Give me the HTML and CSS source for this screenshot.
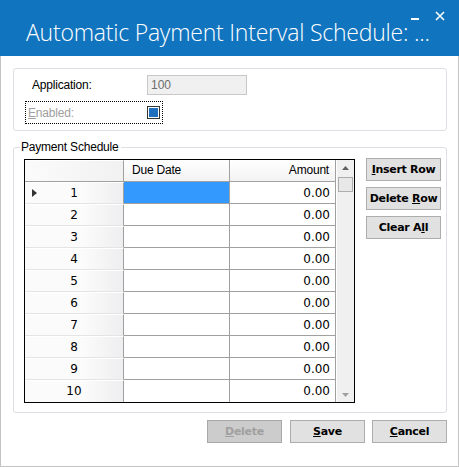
FILE: index.html
```html
<!DOCTYPE html>
<html>
<head>
<meta charset="utf-8">
<link rel="stylesheet" href="styles.css">
</head>
<body>
<div class="window">
  <div class="titlebar">
    <div class="title">Automatic Payment Interval Schedule: ...</div>
    <div class="ctrls">
      <svg class="min" width="8" height="2" viewBox="0 0 8 2"><rect width="8" height="2" fill="#fff"/></svg>
      <svg class="close" width="10" height="10" viewBox="0 0 10 10"><path d="M1 1L9 9M9 1L1 9" stroke="#fff" stroke-width="1.6"/></svg>
    </div>
  </div>
  <div class="content">
    <div class="group1">
      <div class="row app">
        <span class="lbl">Application:</span>
        <span class="textbox">100</span>
      </div>
      <div class="row enabled">
        <span class="lbl dis"><u>E</u>nabled:</span>
        <span class="check"></span>
      </div>
    </div>
    <fieldset class="group2">
      <legend>Payment Schedule</legend>
      <div class="gridwrap">
        <div class="grid">
          <div class="gridbody">
            <div class="hrow">
              <div class="rh"></div>
              <div class="c1 hc">Due Date</div>
              <div class="c2 hc right">Amount</div>
            </div>
            <div class="drow"><div class="rh"><span class="arrow"></span>1</div><div class="c1 sel"></div><div class="c2">0.00</div></div>
            <div class="drow"><div class="rh">2</div><div class="c1"></div><div class="c2">0.00</div></div>
            <div class="drow"><div class="rh">3</div><div class="c1"></div><div class="c2">0.00</div></div>
            <div class="drow"><div class="rh">4</div><div class="c1"></div><div class="c2">0.00</div></div>
            <div class="drow"><div class="rh">5</div><div class="c1"></div><div class="c2">0.00</div></div>
            <div class="drow"><div class="rh">6</div><div class="c1"></div><div class="c2">0.00</div></div>
            <div class="drow"><div class="rh">7</div><div class="c1"></div><div class="c2">0.00</div></div>
            <div class="drow"><div class="rh">8</div><div class="c1"></div><div class="c2">0.00</div></div>
            <div class="drow"><div class="rh">9</div><div class="c1"></div><div class="c2">0.00</div></div>
            <div class="drow last"><div class="rh">10</div><div class="c1"></div><div class="c2">0.00</div></div>
          </div>
          <div class="scroll">
            <svg class="sarrow" width="7" height="4" viewBox="0 0 7 4"><path d="M0 4L3.5 0L7 4Z" fill="#606060"/></svg>
            <div class="thumb"></div>
            <div class="track"></div>
            <svg class="sarrow" width="7" height="4" viewBox="0 0 7 4"><path d="M0 0L3.5 4L7 0Z" fill="#a0a0a0"/></svg>
          </div>
        </div>
        <div class="sidebtns">
          <div class="btn"><span><u>I</u>nsert Row</span></div>
          <div class="btn"><span>Delete <u>R</u>ow</span></div>
          <div class="btn"><span>Clear A<u>l</u>l</span></div>
        </div>
      </div>
    </fieldset>
    <div class="footer">
      <div class="btn bb disabled"><span><u>D</u>elete</span></div>
      <div class="btn bb"><span><u>S</u>ave</span></div>
      <div class="btn bb"><span><u>C</u>ancel</span></div>
    </div>
  </div>
</div>
</body>
</html>
```
FILE: styles.css
```css
html, body { margin: 0; padding: 0; background: #fff; }
body { font-family: Tahoma, "DejaVu Sans", "Liberation Sans", sans-serif; font-size: 11px; color: #000; }
.window {
  width: 459px; height: 467px; box-sizing: border-box;
  border: 1px solid #c4c4c4; border-top: none;
  background: #fff; display: flex; flex-direction: column;
}
.titlebar {
  height: 56px; background: #1174be; margin: 0 -1px; color: #fff;
  display: flex; align-items: flex-start; position: relative;
}
.title {
  font-family: "Open Sans", "Segoe UI", sans-serif; font-weight: 300;
  font-size: 23px; letter-spacing: -0.22px; margin-top: 16px; margin-left: 26px; white-space: nowrap;
}
.ctrls { position: absolute; right: 14px; top: 11px; display: flex; align-items: flex-start; gap: 16px; }
.ctrls .min { margin-top: 7px; }
.content { padding: 12px 11px 0 12px; display: flex; flex-direction: column; }
.group1 {
  height: 61px; border: 1px solid #dcdfe4; border-radius: 3px;
  position: relative;
}
.row { display: flex; align-items: center; }
.app { margin-top: 6px; height: 20px; }
.app .lbl { margin-left: 18px; width: 115px; font-family: "Liberation Sans", sans-serif; font-size: 12px; letter-spacing: -0.2px; }
.textbox {
  box-sizing: border-box; width: 100px; height: 20px; background: #f0f0f0;
  border: 1px solid #c8c8c8; color: #6d6d6d; padding-left: 3px; line-height: 18px;
  font-family: "Liberation Sans", sans-serif; font-size: 12px;
}
.enabled {
  margin-top: 6px; margin-left: 11px; width: 138px; height: 23px; box-sizing: border-box;
  border: 1px dotted #000; padding-left: 2px;
}
.enabled .lbl { width: 119px; color: #a0a0a0; font-family: "Liberation Sans", sans-serif; font-size: 12px; letter-spacing: -0.2px; }
.check {
  width: 13px; height: 13px; box-sizing: border-box; border: 1px solid #333;
  background: #1e6fbd; box-shadow: inset 0 0 0 1px #fff;
}
.group2 {
  margin: 9px 0 0 0; padding: 0; height: 273px; box-sizing: border-box;
  border: 1px solid #dcdfe4; border-radius: 3px;
}
.group2 legend {
  margin-left: 6px; padding: 0 2px 0 1px; font-family: "Liberation Sans", sans-serif; font-size: 12px;
  letter-spacing: -0.2px; color: #000;
}
.gridwrap { display: flex; align-items: flex-start; margin-top: 5px; margin-left: 10px; }
.grid {
  display: flex; border: 1px solid #000; width: 331px; height: 244px; box-sizing: border-box;
}
.gridbody { display: flex; flex-direction: column; width: 312px; }
.hrow, .drow { display: flex; height: 22px; box-sizing: border-box; }
.hrow .rh { background: linear-gradient(to right, #fbfbfb, #f1f1f2); border-right: 1px solid #a0a0a0; border-bottom: 1px solid #a0a0a0; }
.rh {
  width: 99px; box-sizing: border-box; position: relative;
  background: linear-gradient(to right, #fbfbfb 60%, #eeeef0);
  border-right: 1px solid #a0a0a0; border-bottom: 1px solid #e4e4e4; border-top: 1px solid #fff;
  text-align: center; font-family: "DejaVu Sans", sans-serif; font-size: 12px; line-height: 21px; color: #000;
}
.drow.last .rh { border-bottom: none; }
.c1 { width: 106px; box-sizing: border-box; border-right: 1px solid #a0a0a0; border-bottom: 1px solid #a0a0a0; background: #fff; }
.c2 {
  width: 106px; box-sizing: border-box; border-right: 1px solid #a0a0a0; border-bottom: 1px solid #a0a0a0;
  text-align: right; padding-right: 5px; font-family: "DejaVu Sans", sans-serif; font-size: 12px; line-height: 22px;
}
.drow.last .c1, .drow.last .c2 { border-bottom: none; }
.hc {
  background: linear-gradient(#fff, #f3f3f3); font-family: "Liberation Sans", sans-serif; font-size: 12px;
  line-height: 21px; padding-left: 8px; letter-spacing: -0.2px;
}
.hc.right { padding-left: 0; padding-right: 6px; text-align: right; }
.sel { background: #3399ff; }
.arrow {
  position: absolute; left: 7px; top: 6px; width: 0; height: 0;
  border-left: 5px solid #333; border-top: 4.5px solid transparent; border-bottom: 4.5px solid transparent;
}
.scroll {
  width: 17px; background: #f0f0f0; display: flex; flex-direction: column; align-items: center;
}
.sarrow { margin: 6px 0 7px; }
.scroll .sarrow:last-child { margin: 6px 0 5px; }
.thumb { width: 15px; height: 15px; box-sizing: border-box; border: 1px solid #adadad; background: #e8e8e8; }
.track { flex: 1; }
.sidebtns { display: flex; flex-direction: column; gap: 6px; margin-left: 11px; margin-top: -1px; }
.btn {
  width: 75px; height: 23px; box-sizing: border-box; background: #e1e1e1; border: 1px solid #adadad;
  display: flex; align-items: center; justify-content: center;
  font-family: "DejaVu Sans", sans-serif; font-weight: bold; font-size: 11px; letter-spacing: -0.3px; color: #000;
  white-space: nowrap;
}
.footer { display: flex; justify-content: flex-end; gap: 7px; margin-top: 7px; padding-right: 0px; }
.footer .btn:nth-child(2) { margin-left: 1px; }
.disabled { background: #cccccc; border-color: #a8a8a8; color: #a0a0a0; }
```
